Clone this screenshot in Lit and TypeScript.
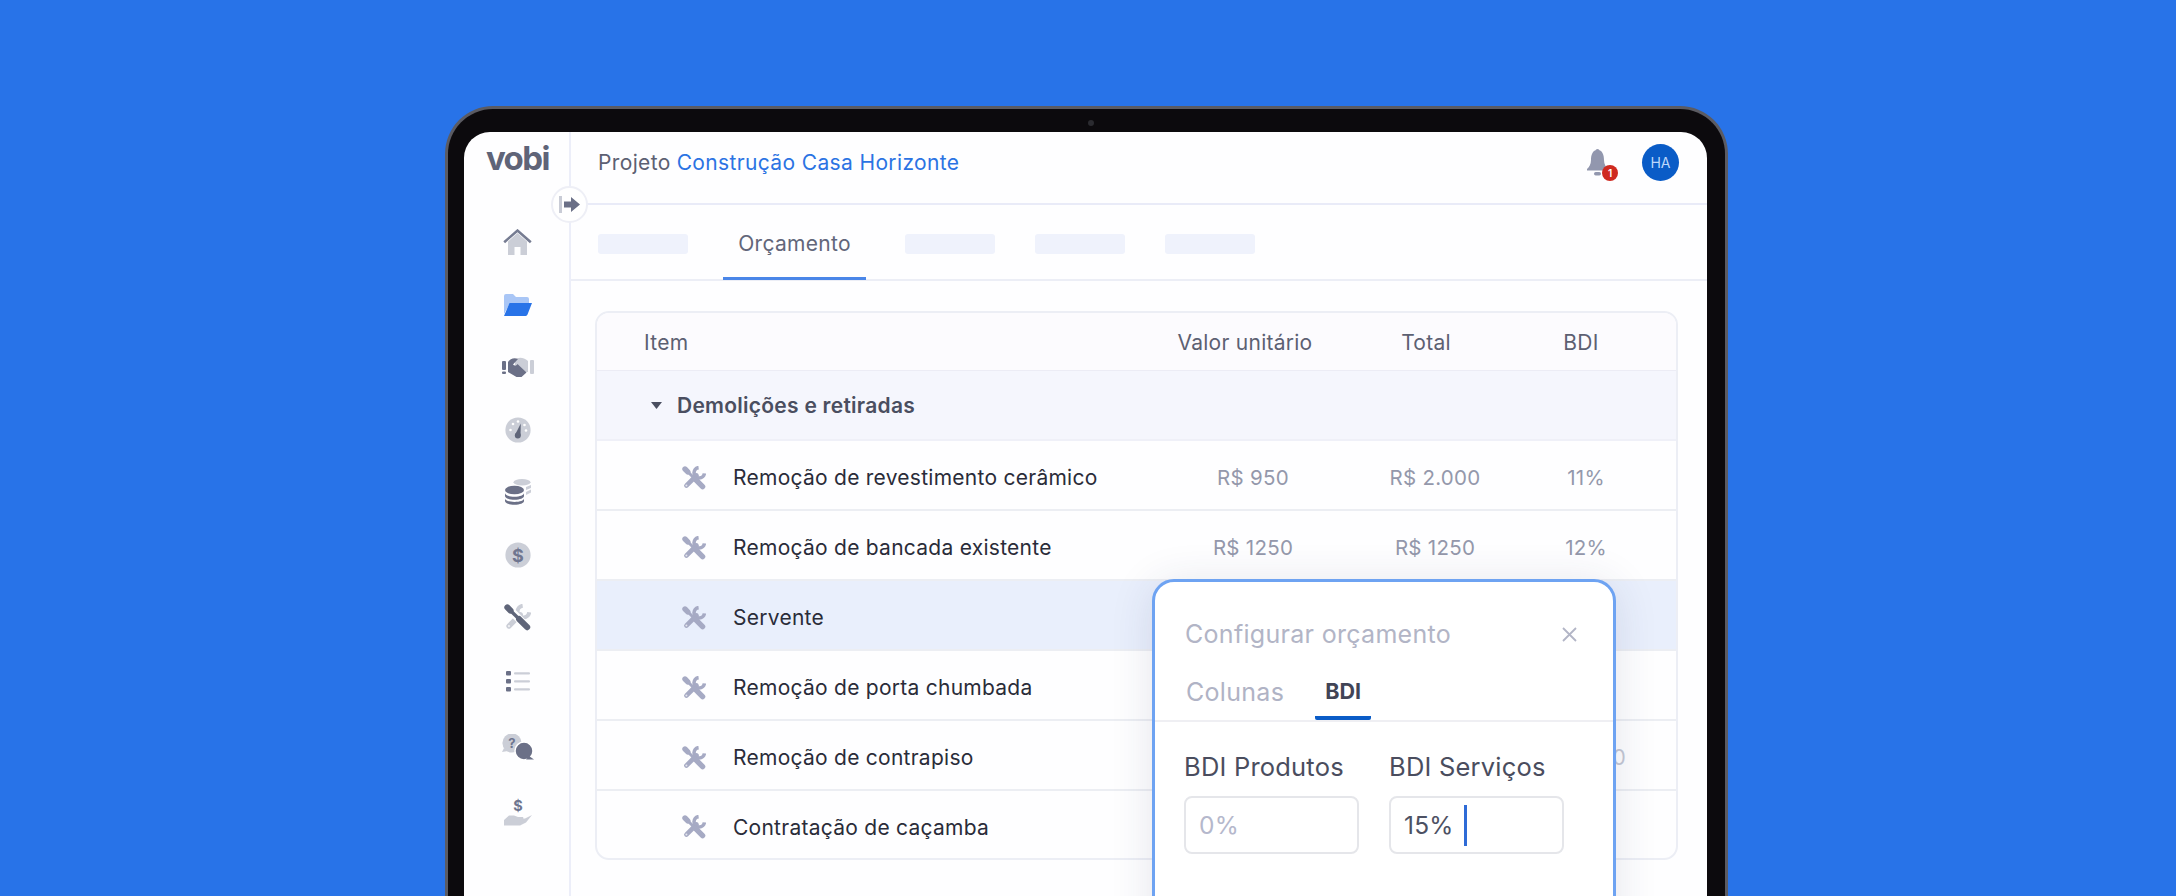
import { LitElement, css, html, svg } from "lit";
import { customElement } from "lit/decorators.js";

const DARK = "#6b7087";
const LIGHT = "#cbced7";

const tools = (screwdriver: string, wrench: string, halo = "none") => svg`
  <path d="M4.4 19.6 14.5 9.5" stroke=${wrench} stroke-width="4.6" stroke-linecap="round" fill="none" />
  <path d="M22.4 7.4A5.2 5.2 0 1 1 16.6 1.6" stroke=${wrench} stroke-width="3.6" fill="none" />
  <circle cx="4.4" cy="19.6" r="1" fill="#fff" opacity="0.7" />
  <path d="M5 5 20 20" stroke=${halo} stroke-width="7" fill="none" />
  <path d="M3 3 12 12" stroke=${screwdriver} stroke-width="3" fill="none" />
  <path d="M3 3 5.8 5.8" stroke=${screwdriver} stroke-width="5.4" stroke-linecap="round" fill="none" />
  <path d="M13.4 13.4 20.6 20.6" stroke=${screwdriver} stroke-width="5.4" stroke-linecap="round" fill="none" />
`;

const navIcons = [
  html`<svg width="29" height="26" viewBox="0 0 29 26">
    <path d="M5 12.5 14.5 4 24 12.5V26H17.5V18H11.5V26H5Z" fill=${LIGHT} />
    <path d="M1.2 13.2 14.5 1.6 27.8 13.2" stroke="#767c92" stroke-width="2.6" fill="none" />
  </svg>`,
  html`<svg width="28" height="22" viewBox="0 0 28 22">
    <path d="M0 2a2 2 0 0 1 2-2h7l3 3h11a2 2 0 0 1 2 2v4H6L0 20Z" fill="#a9c6f6" />
    <path d="M5.5 9H28L23.5 20.5a2 2 0 0 1-2 1.5H0Z" fill="#2873e8" />
  </svg>`,
  html`<svg width="32" height="20" viewBox="0 0 32 20">
    <rect x="0" y="4" width="4" height="9" rx="1" fill=${DARK} />
    <rect x="0" y="14.5" width="4" height="2.5" rx="1" fill=${DARK} />
    <rect x="28" y="3" width="4" height="14" rx="1" fill=${LIGHT} />
    <path d="M13 3C16 0 21 0 26 4V15H22L13 8Z" fill=${LIGHT} />
    <path d="M6 5C8 2 12 0 16 2L11 7.5C12.5 9.5 14.5 8.5 15.5 7L24.5 15.5 19.5 20H14.5L6 15Z" fill=${DARK} />
  </svg>`,
  html`<svg width="26" height="26" viewBox="0 0 26 26">
    <circle cx="13" cy="13" r="12.6" fill=${LIGHT} />
    <circle cx="5.5" cy="13" r="1.3" fill="#fff" />
    <circle cx="8" cy="7" r="1.3" fill="#fff" />
    <circle cx="13" cy="4.5" r="1.3" fill="#fff" />
    <circle cx="19.5" cy="8" r="1.3" fill="#fff" />
    <circle cx="21" cy="13.5" r="1.3" fill="#fff" />
    <path d="M15.8 6.5 15.5 18.5 10.2 17.6Z" fill="#5f6579" />
    <circle cx="12.8" cy="18.4" r="3" fill="#5f6579" />
  </svg>`,
  html`<svg width="26" height="26" viewBox="0 0 26 26">
    <ellipse cx="17" cy="3.2" rx="8.5" ry="3.2" fill=${LIGHT} />
    <path d="M21 8 26 6V9L21 11ZM21 13 26 10.5V13.5L21 16Z" fill=${LIGHT} />
    <ellipse cx="9.5" cy="11" rx="9.5" ry="4.3" fill=${DARK} />
    <path d="M0 14c0 2 4 3.8 9.5 3.8S19 16 19 14v3c0 2-4 3.8-9.5 3.8S0 19 0 17Z" fill=${DARK} />
    <path d="M0 19.5c0 2 4 3.4 9.5 3.4S19 21.5 19 19.5V22c0 2-4 3.8-9.5 3.8S0 24 0 22Z" fill=${DARK} />
  </svg>`,
  html`<svg width="26" height="26" viewBox="0 0 26 26">
    <circle cx="13" cy="13" r="12.6" fill=${LIGHT} />
    <text x="13" y="19.5" class="glyph" font-size="18">$</text>
  </svg>`,
  html`<svg width="27" height="27" viewBox="0 0 24 24">${tools("#5f6579", LIGHT, "#fff")}</svg>`,
  html`<svg width="24" height="21" viewBox="0 0 24 21">
    <rect x="0" y="0" width="5" height="4.5" rx="1" fill=${DARK} />
    <rect x="0" y="8" width="5" height="4.5" rx="1" fill=${DARK} />
    <rect x="0" y="16" width="5" height="4.5" rx="1" fill=${DARK} />
    <rect x="8" y="1.2" width="16" height="2.2" rx="1" fill=${LIGHT} />
    <rect x="8" y="9.2" width="16" height="2.2" rx="1" fill=${LIGHT} />
    <rect x="8" y="17.2" width="16" height="2.2" rx="1" fill=${LIGHT} />
  </svg>`,
  html`<svg width="32" height="26" viewBox="0 0 32 26">
    <circle cx="10" cy="9" r="9.6" fill=${LIGHT} />
    <path d="M2 14 0 18 6 17Z" fill=${LIGHT} />
    <circle cx="22" cy="17" r="9" fill=${DARK} stroke="#fff" stroke-width="1.5" />
    <path d="M27 22 32 25.6H24Z" fill=${DARK} />
    <text x="10" y="14" class="glyph" font-size="13">?</text>
  </svg>`,
  html`<svg width="28" height="28" viewBox="0 0 28 28">
    <text x="14" y="13" class="glyph" font-size="14.5">$</text>
    <path d="M0 22 5 17.5H10L14 19H18.5C19.8 19 19.8 21.5 18.5 21.5H14L21 20.5 28 17 22 24.5 16 27.5H0Z" fill=${LIGHT} />
  </svg>`,
];

const rows = [
  { name: "Remoção de revestimento cerâmico", unit: "R$ 950", total: "R$ 2.000", bdi: "11%" },
  { name: "Remoção de bancada existente", unit: "R$ 1250", total: "R$ 1250", bdi: "12%" },
  { name: "Servente", selected: true },
  { name: "Remoção de porta chumbada" },
  { name: "Remoção de contrapiso", tail: "0" },
  { name: "Contratação de caçamba" },
];

@customElement("app-root")
export class AppRoot extends LitElement {
  static styles = css`
    :host {
      display: block;
      height: 896px;
      overflow: hidden;
      background: #2873e8;
      font-family: Inter, "Liberation Sans", sans-serif;
      padding-top: 106px;
      box-sizing: border-box;
    }

    .device {
      position: relative;
      box-sizing: border-box;
      width: 1283px;
      height: 900px;
      margin-left: 445px;
      padding: 23px 18px 0 16px;
      background: #0c0a0d;
      border: 3px solid #5b5b62;
      border-bottom: 0;
      border-radius: 48px 48px 0 0;
    }

    .camera {
      position: absolute;
      left: 640px;
      top: 11px;
      width: 6px;
      height: 6px;
      border-radius: 50%;
      background: #2b2b30;
    }

    .screen {
      position: relative;
      display: flex;
      height: 100%;
      background: #fefeff;
      border-radius: 26px 26px 0 0;
      overflow: hidden;
    }

    .side {
      flex: none;
      width: 105px;
      border-right: 2px solid #eceef9;
    }

    .logo {
      padding: 6px 0 0 22px;
      height: 77px;
      box-sizing: border-box;
      color: #5f6478;
      font-size: 33px;
      font-weight: 700;
      letter-spacing: -1.6px;
      line-height: 40px;
    }

    .nav {
      display: grid;
      grid-template-rows: 65px 62px 62px 63px 62px 63px 63px 65px 66px 63px;
      padding-left: 2px;
    }

    .nav div {
      display: flex;
      align-items: center;
      justify-content: center;
    }

    .glyph {
      font-family: Inter, sans-serif;
      font-weight: 700;
      text-anchor: middle;
      fill: #6f7690;
    }

    .toggle {
      position: absolute;
      left: 87px;
      top: 54px;
      width: 37px;
      height: 37px;
      box-sizing: border-box;
      display: flex;
      align-items: center;
      justify-content: center;
      background: #fff;
      border: 2px solid #eeeff6;
      border-radius: 50%;
    }

    .main {
      flex: 1;
      min-width: 0;
    }

    .top {
      display: flex;
      align-items: center;
      height: 73px;
      box-sizing: border-box;
      padding: 0 28px 10px 27px;
      border-bottom: 2px solid #e9ebf8;
      font-size: 21px;
      letter-spacing: 0.36px;
      color: #5c6072;
    }

    .top a {
      color: #2b73e3;
      margin-left: 6px;
    }

    .bell {
      position: relative;
      display: flex;
      margin-left: auto;
      margin-right: 34px;
    }

    .count {
      position: absolute;
      left: 15px;
      top: 16px;
      width: 16px;
      height: 16px;
      border-radius: 50%;
      background: #cf2a20;
      color: #fff;
      font-size: 10px;
      font-weight: 600;
      letter-spacing: 0;
      line-height: 16px;
      text-align: center;
    }

    .avatar {
      width: 37px;
      height: 37px;
      border-radius: 50%;
      background: #0a5cc7;
      color: #bcd8fb;
      font-size: 14px;
      letter-spacing: 0;
      line-height: 37px;
      text-align: center;
    }

    .tabs {
      display: flex;
      align-items: center;
      gap: 40px;
      height: 76px;
      box-sizing: border-box;
      padding-left: 27px;
      border-bottom: 2px solid #eceef6;
    }

    .ghost {
      width: 90px;
      height: 20px;
      margin-top: 4px;
      border-radius: 3px;
      background: #eff2fc;
    }

    .tab {
      box-sizing: border-box;
      width: 143px;
      height: 76px;
      margin: 0 -1px 0 -5px;
      border-bottom: 3px solid #4a86e8;
      color: #62667a;
      font-size: 21px;
      letter-spacing: 0.3px;
      line-height: 80px;
      text-align: center;
    }

    .content {
      padding: 30px 29px 0 24px;
    }

    .table {
      border: 2px solid #eceef5;
      border-radius: 14px;
      overflow: hidden;
      font-size: 21px;
      letter-spacing: 0.26px;
    }

    .head {
      display: grid;
      grid-template-columns: 1fr 182px 180px 130px;
      align-items: center;
      height: 57px;
      padding: 0 30px 0 47px;
      background: #fcfbfe;
      border-bottom: 1px solid #ececf5;
      color: #5c6072;
    }

    .head span {
      padding-top: 2px;
    }

    .head span + span,
    .row span + span {
      text-align: center;
    }

    .group {
      display: flex;
      align-items: center;
      gap: 15px;
      height: 70px;
      box-sizing: border-box;
      padding: 1px 0 0 54px;
      background: #f5f6fd;
      border-bottom: 2px solid #eff0f8;
      color: #4a4e60;
      font-weight: 600;
    }

    .row {
      display: grid;
      grid-template-columns: 1fr 192px 172px 130px;
      align-items: center;
      height: 70px;
      box-sizing: border-box;
      padding: 5px 25px 0 85px;
      border-bottom: 2px solid #eceef3;
      color: #2a2c39;
    }

    .row:last-child {
      height: 67px;
      border-bottom: 0;
    }

    .row.selected {
      background: #e9effc;
    }

    .row .value {
      color: #9498ab;
      font-size: 20.5px;
    }

    .name {
      display: flex;
      align-items: center;
      gap: 27px;
      grid-column: 1;
    }

    .row .tail {
      grid-column: 4;
      justify-self: end;
      margin-right: 25px;
      color: #c4c7d4;
    }

    .popup {
      position: absolute;
      left: 688px;
      top: 447px;
      box-sizing: border-box;
      width: 464px;
      height: 500px;
      background: #fff;
      border: 3px solid #6ea3f2;
      border-radius: 22px;
      box-shadow: 0 4px 44px rgba(40, 50, 90, 0.12);
    }

    .popup header {
      display: flex;
      align-items: center;
      justify-content: space-between;
      height: 78px;
      padding: 26px 36px 0 30px;
      box-sizing: border-box;
      color: #b2b5c6;
      font-size: 25px;
      letter-spacing: 0.3px;
    }

    .popup nav {
      display: flex;
      height: 62px;
      box-sizing: border-box;
      padding-left: 21px;
      border-bottom: 2px solid #efeff3;
      font-size: 25px;
    }

    .popup nav span {
      box-sizing: border-box;
      padding: 17px 10px 0;
      color: #b0b3c5;
      letter-spacing: 0.3px;
    }

    .popup nav .on {
      margin-left: 21px;
      height: 60px;
      padding: 18px 10px 0;
      color: #414456;
      font-size: 21.5px;
      font-weight: 700;
      letter-spacing: 0;
      border-bottom: 4px solid #0a5cc7;
      border-radius: 0 0 2px 2px;
    }

    .fields {
      display: flex;
      gap: 30px;
      padding: 29px 0 0 29px;
    }

    .field {
      width: 175px;
      color: #4a4d5e;
      font-size: 25.5px;
      letter-spacing: 0.2px;
      white-space: nowrap;
    }

    .input {
      display: flex;
      align-items: center;
      box-sizing: border-box;
      height: 58px;
      margin-top: 14px;
      padding-left: 13px;
      border: 2px solid #e5e6ea;
      border-radius: 8px;
      color: #b5b8cc;
      font-size: 24.5px;
    }

    .input.filled {
      color: #4d5163;
    }

    .caret {
      width: 3.5px;
      height: 41px;
      margin-left: 10px;
      background: #2f6bd6;
    }
  `;

  render() {
    return html`
      <div class="device">
        <div class="camera"></div>
        <div class="screen">
          <aside class="side">
            <div class="logo">vobi</div>
            <div class="nav">${navIcons.map((icon) => html`<div>${icon}</div>`)}</div>
          </aside>
          <div class="toggle">
            <svg width="22" height="17" viewBox="0 0 22 17">
              <rect x="0" y="0" width="3" height="17" fill="#c9ccd6" />
              <path d="M5 5.5H12V1L21 8.5 12 16V11.5H5Z" fill="#6b7087" />
            </svg>
          </div>
          <section class="main">
            <div class="top">
              Projeto <a>Construção Casa Horizonte</a>
              <div class="bell">
                <svg width="21" height="27" viewBox="0 0 21 27">
                  <circle cx="10.5" cy="2" r="2" fill="#9297ae" />
                  <path d="M10.5 1C15.5 1 17 6 17 11 17 15.5 19 18 21 20V21.5H0V20C2 18 4 15.5 4 11 4 6 5.5 1 10.5 1Z" fill="#9297ae" />
                  <rect x="7" y="23" width="7" height="3.5" rx="1.7" fill="#9297ae" />
                </svg>
                <span class="count">1</span>
              </div>
              <div class="avatar">HA</div>
            </div>
            <div class="tabs">
              <div class="ghost"></div>
              <div class="tab">Orçamento</div>
              <div class="ghost"></div>
              <div class="ghost"></div>
              <div class="ghost"></div>
            </div>
            <div class="content">
              <div class="table">
                <div class="head">
                  <span>Item</span><span>Valor unitário</span><span>Total</span><span>BDI</span>
                </div>
                <div class="group">
                  <svg width="11" height="7" viewBox="0 0 11 7"><path d="M0 0H11L5.5 7Z" fill="#4a4e60" /></svg>
                  Demolições e retiradas
                </div>
                ${rows.map(
                  (r) => html`
                    <div class="row ${r.selected ? "selected" : ""}">
                      <span class="name">
                        <svg width="24" height="24" viewBox="0 0 24 24">${tools("#a6aac4", "#a6aac4")}</svg>
                        ${r.name}
                      </span>
                      ${r.unit
                        ? html`<span class="value">${r.unit}</span><span class="value">${r.total}</span
                            ><span class="value">${r.bdi}</span>`
                        : ""}
                      ${r.tail ? html`<span class="tail">${r.tail}</span>` : ""}
                    </div>
                  `,
                )}
              </div>
            </div>
          </section>
          <div class="popup">
            <header>
              Configurar orçamento
              <svg width="15" height="15" viewBox="0 0 15 15">
                <path d="M1 1 14 14M14 1 1 14" stroke="#b2b5c6" stroke-width="1.8" fill="none" />
              </svg>
            </header>
            <nav><span>Colunas</span><span class="on">BDI</span></nav>
            <div class="fields">
              <div class="field">BDI Produtos<div class="input">0%</div></div>
              <div class="field">BDI Serviços<div class="input filled">15%<i class="caret"></i></div></div>
            </div>
          </div>
        </div>
      </div>
    `;
  }
}
